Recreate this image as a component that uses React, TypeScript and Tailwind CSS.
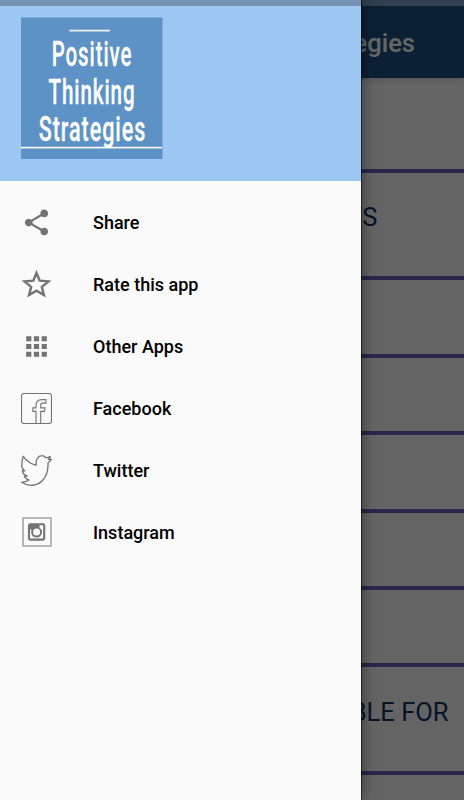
import React from 'react';
import { MdShare, MdApps } from 'react-icons/md';

function StarIcon() {
  return (
    <svg className="w-[31px] h-[31px]" viewBox="0 0 31 31" fill="none" stroke="currentColor" strokeWidth={2.4}>
      <path d="M15.5 4 18.7 11.7 27.5 12.4 20.8 17.9 22.9 26 15.5 21.7 8.1 26 10.2 17.9 3.5 12.4 12.3 11.7Z" />
    </svg>
  );
}

function FacebookIcon() {
  return (
    <svg className="w-[31px] h-[31px]" viewBox="0 0 31 31" fill="none" stroke="currentColor" strokeWidth={1.1}>
      <rect x="0.5" y="0.5" width="30" height="30" rx="2.5" />
      <path d="M15 30.5V18.4H11.9V14.9H15V12.2C15 8.4 17.1 6.6 20.9 6.6H24.9V10.1H22.2C20.2 10.1 19.7 10.8 19.7 12.4V14.9H24.1L23.6 18.4H19.7V30.5" />
    </svg>
  );
}

function TwitterIcon() {
  return (
    <svg className="w-[31px] h-[31px]" viewBox="0 0 31 31" fill="none" stroke="currentColor" strokeWidth={1.3} strokeLinejoin="round">
      <path d="M2.3 1.3C5.5 5.8 10 9 15.2 10.1C14.5 5 17 .8 20.6 .7C22.5 .6 23.7 1.4 24.9 2.7C26.5 2.6 27.8 2.2 29.3 1.5C29 2.9 28.4 3.6 27.3 4.5L30.4 4.5C29.5 6 28.3 7 27 7.9C27.3 14 26 20.5 21.7 25.3C16.5 31.2 7.5 31.9 .4 27.3C3.3 27.2 5.6 26.6 8 25C5.8 24.6 4.2 23.4 3.4 21.5L6.2 21.1C3.2 20 1.6 18.3 1.3 15.6L3.8 15.9C1 13.7 .3 10.8 1 8.5C1.1 6 1.1 3.7 2.3 1.3Z" />
    </svg>
  );
}

function InstagramIcon() {
  return (
    <svg className="w-[31px] h-[31px]" viewBox="0 0 31 31" fill="none" stroke="currentColor">
      <rect x="2" y="1" width="28" height="28" strokeWidth={1} />
      <rect x="8" y="7.4" width="15.2" height="15.2" rx="1.4" strokeWidth={2.1} />
      <path d="M8 7.4H18.5V12.6H8Z" fill="currentColor" stroke="none" />
      <circle cx="15.6" cy="15.1" r="4.5" fill="#fafafa" strokeWidth={2} />
      <rect x="18.9" y="8.5" width="3.2" height="3.2" fill="#fafafa" stroke="none" />
    </svg>
  );
}

const menuItems = [
  { label: 'Share', icon: <MdShare size={31} /> },
  { label: 'Rate this app', icon: <StarIcon /> },
  { label: 'Other Apps', icon: <MdApps size={31} /> },
  { label: 'Facebook', icon: <FacebookIcon /> },
  { label: 'Twitter', icon: <TwitterIcon /> },
  { label: 'Instagram', icon: <InstagramIcon /> },
];

const rows = [
  { text: '', className: 'h-[95px]' },
  { text: 'TS', className: 'h-[107px] pr-[86.5px]' },
  { text: '', className: 'h-[78px]' },
  { text: '', className: 'h-[77px]' },
  { text: '', className: 'h-[78px]' },
  { text: '', className: 'h-[77px]' },
  { text: '', className: 'h-[77px]' },
  { text: 'BLE FOR', className: 'h-[108px] pr-[15.5px]' },
  { text: '', className: 'h-[77px]' },
];

function Logo() {
  return (
    <svg className="w-[142px] h-[142px]" viewBox="0 0 142 142" fontFamily="Roboto, sans-serif" fill="#fff">
      <rect y="0.5" width="141.5" height="141.5" fill="#5d92c7" />
      <rect x="48.5" y="12.7" width="40.5" height="1.8" fill="#e9f0f8" />
      <g fontSize="34.5" fontWeight={500} letterSpacing="1.5" textAnchor="middle" stroke="#fff" strokeWidth="0.3">
        <text transform="translate(71 49.3) scale(.595 1)">Positive</text>
        <text transform="translate(71 86.5) scale(.598 1)">Thinking</text>
        <text transform="translate(71.5 123.6) scale(.625 1)">Strategies</text>
      </g>
      <rect y="129.8" width="141" height="1.6" />
    </svg>
  );
}

export default function App() {
  return (
    <div className="relative w-full h-[800px] overflow-hidden bg-[#fafafa] font-[Roboto,sans-serif]">
      <div className="flex flex-col">
        <div className="h-1.5 bg-[#7c9fc3]" />
        <header className="relative z-10 h-[72px] flex items-center justify-end pt-0.5 pr-[49px] bg-[#1e5285] shadow-md">
          <h1 className="text-[25.5px] font-medium text-white">egies</h1>
        </header>
        {rows.map((row, i) => (
          <div
            key={i}
            className={`shrink-0 flex items-center justify-end pb-3.5 border-b-4 border-[#6762be] text-[25.5px] text-[#103261] ${row.className}`}
          >
            {row.text}
          </div>
        ))}
      </div>

      <div className="absolute inset-0 z-20 bg-black/60" />

      <aside className="absolute inset-y-0 left-0 z-30 w-[361px] flex flex-col bg-[#fafafa] shadow-[1px_0_0_rgba(0,0,0,0.5),0_0_14px_rgba(0,0,0,0.5)]">
        <div className="h-1.5 bg-[#7592b1]" />
        <div className="h-[175px] pl-[21px] pt-[11px] bg-[#9dc8f3]">
          <Logo />
        </div>
        <nav className="pt-2.5">
          {menuItems.map((item) => (
            <button key={item.label} className="flex items-center w-full h-[62px] pl-[20.5px] gap-[41.5px] text-left">
              <span className="text-[#737373]">{item.icon}</span>
              <span className="text-[18px] font-medium text-black">{item.label}</span>
            </button>
          ))}
        </nav>
      </aside>
    </div>
  );
}
